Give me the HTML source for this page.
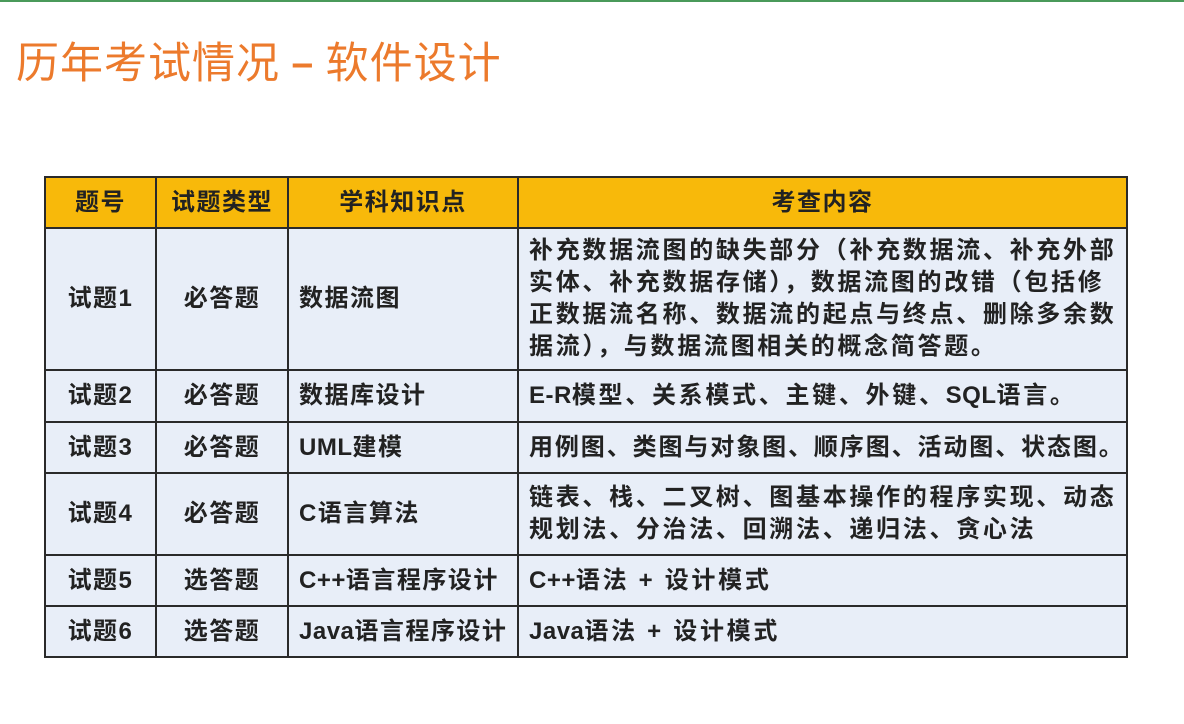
<!DOCTYPE html>
<html><head><meta charset="utf-8"><style>
html,body{margin:0;padding:0;width:1184px;height:724px;background:#fff;overflow:hidden;position:relative;font-family:"Liberation Sans","Noto Sans CJK SC",sans-serif;}
.topline{position:absolute;left:0;top:0;width:1184px;height:2px;background:#4a9a5a;}
.title{position:absolute;left:16px;top:32px;font-size:43px;color:#ec7a2c;font-family:"Noto Sans CJK SC",sans-serif;letter-spacing:1px;line-height:56px;white-space:nowrap;}
.title b{font-weight:bold;}
table{position:absolute;left:44px;top:176px;border-collapse:collapse;table-layout:fixed;width:1082px;}
td,th{border:2px solid #2a2a2a;font-size:24px;font-weight:bold;color:#222;white-space:nowrap;letter-spacing:1.5px;padding:0 0 0 10px;line-height:32px;background:#e8eef8;overflow:visible;}
td.w{letter-spacing:2.7px;}
td.n{letter-spacing:1.9px;}
th{background:#f8b90a;text-align:center;padding:0;height:49px;}
td.c{text-align:center;padding:0;}
.l{letter-spacing:0.5px;}
</style></head><body>
<div class="topline"></div>
<div class="title">历年考试情况 <b>–</b> 软件设计</div>
<table>
<colgroup><col style="width:111px"><col style="width:132px"><col style="width:230px"><col style="width:609px"></colgroup>
<tr><th>题号</th><th>试题类型</th><th>学科知识点</th><th>考查内容</th></tr>
<tr style="height:142px"><td class="c">试题1</td><td class="c">必答题</td><td>数据流图</td><td class="w">补充数据流图的缺失部分（补充数据流、补充外部<br>实体、补充数据存储），数据流图的改错（包括修<br>正数据流名称、数据流的起点与终点、删除多余数<br>据流），与数据流图相关的概念简答题。</td></tr>
<tr style="height:52px"><td class="c">试题2</td><td class="c">必答题</td><td>数据库设计</td><td class="w"><span class="l">E-R</span>模型、关系模式、主键、外键、<span class="l">SQL</span>语言。</td></tr>
<tr style="height:51px"><td class="c">试题3</td><td class="c">必答题</td><td><span class="l">UML</span>建模</td><td class="n">用例图、类图与对象图、顺序图、活动图、状态图。</td></tr>
<tr style="height:82px"><td class="c">试题4</td><td class="c">必答题</td><td>C语言算法</td><td class="w">链表、栈、二叉树、图基本操作的程序实现、动态<br>规划法、分治法、回溯法、递归法、贪心法</td></tr>
<tr style="height:51px"><td class="c">试题5</td><td class="c">选答题</td><td><span class="l">C++</span>语言程序设计</td><td class="w"><span class="l">C++</span>语法 + 设计模式</td></tr>
<tr style="height:51px"><td class="c">试题6</td><td class="c">选答题</td><td><span class="l">Java</span>语言程序设计</td><td class="w"><span class="l">Java</span>语法 + 设计模式</td></tr>
</table>
</body></html>
